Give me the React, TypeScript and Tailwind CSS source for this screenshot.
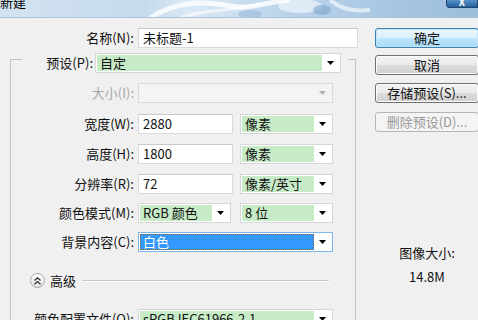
import React from 'react';

const Arrow = ({ disabled }: { disabled?: boolean }) => (
  <svg width="7" height="4" viewBox="0 0 7 4">
    <path d="M0 0h7L3.5 4z" fill={disabled ? '#b0b0b0' : '#000'} />
  </svg>
);

interface ComboProps {
  value?: string;
  width: string;
  disabled?: boolean;
  focused?: boolean;
}

const Combo: React.FC<ComboProps> = ({ value, width, disabled, focused }) => (
  <div
    className={`flex h-[20px] p-[1px] border ${width} ${
      focused ? 'border-[#7eb4ea] bg-white' : disabled ? 'border-[#d9d9d9] bg-[#f4f4f4]' : 'border-[#d6d6d6] bg-white'
    }`}
  >
    {focused ? (
      <span className="flex-1 flex items-center pl-[2px] bg-[#3399ff] text-white border border-dotted border-[#8a6b33]">
        {value}
      </span>
    ) : (
      <span
        className={`flex-1 flex items-center pl-[3px] whitespace-nowrap ${disabled ? 'bg-[#f4f4f4]' : 'bg-[#c7ebc7]'}`}
      >
        {value}
      </span>
    )}
    <span className="w-[17px] flex-none flex items-center justify-center">
      <Arrow disabled={disabled} />
    </span>
  </div>
);

const Input = ({ value, width }: { value: string; width: string }) => (
  <div className={`h-[20px] flex items-center pl-[4px] bg-white border border-[#dadada] border-t-[#c9c9c9] ${width}`}>
    {value}
  </div>
);

const Row = ({ label, children, className, disabled }: { label: string; children: React.ReactNode; className: string; disabled?: boolean }) => (
  <div className={`flex items-center h-[20px] ${className}`}>
    <span className={`w-[127px] text-right pr-[4px] whitespace-nowrap ${disabled ? 'text-[#a8a8a8]' : ''}`}>{label}</span>
    {children}
  </div>
);

const Button = ({ label, className, primary, disabled }: { label: string; className: string; primary?: boolean; disabled?: boolean }) => (
  <div
    className={`h-[20px] w-[104px] rounded-[3px] border flex items-center justify-center whitespace-nowrap ${className} ${
      primary
        ? 'border-[#3c7fb1] bg-[linear-gradient(#eaf6fd_0%,#d9f0fc_50%,#bee6fd_51%,#a7d9f5_100%)] shadow-[inset_0_0_0_1px_#c2e4f6]'
        : disabled
          ? 'border-[#b5b5b5] bg-[#f4f4f4] text-[#9a9a9a]'
          : 'border-[#707070] bg-[linear-gradient(#f2f2f2_0%,#ebebeb_50%,#dddddd_51%,#cfcfcf_100%)] shadow-[inset_0_0_0_1px_#fcfcfc]'
    }`}
  >
    {label}
  </div>
);

export default function App() {
  return (
    <div className="relative w-[478px] h-[320px] overflow-hidden bg-[#f0f0f0] text-[13px] leading-[16px] text-[#111] font-['Noto_Sans_CJK_SC','Microsoft_YaHei',sans-serif]">
      {/* title bar */}
      <div className="relative h-[18px] overflow-hidden border-b border-[#a9c4dc] bg-[linear-gradient(90deg,#d3e3f0_0%,#c6dbee_30%,#dce9f5_40%,#b9d3ea_60%,#a6c4e0_85%,#9dbddb_100%)]">
        <svg className="absolute left-0 top-0" width="478" height="18" viewBox="0 0 478 18">
          <path d="M150 18 C175 2 200 0 230 6 C250 10 265 2 290 0" stroke="#ffffff" strokeOpacity="0.8" strokeWidth="5" fill="none" />
          <path d="M180 18 C205 8 235 12 260 4" stroke="#ffffff" strokeOpacity="0.6" strokeWidth="3" fill="none" />
          <ellipse cx="300" cy="6" rx="22" ry="7" fill="#ffffff" fillOpacity="0.55" />
          <ellipse cx="322" cy="10" rx="9" ry="5" fill="#7fa6cc" fillOpacity="0.6" />
          <path d="M330 0 C340 8 350 12 370 10" stroke="#eaf2fa" strokeOpacity="0.8" strokeWidth="4" fill="none" />
          <ellipse cx="250" cy="14" rx="12" ry="4" fill="#8fb2d4" fillOpacity="0.5" />
        </svg>
        <span className="absolute left-[0px] top-[-6px] text-[13px] leading-[16px] text-black">新建</span>
        <div className="absolute right-0 top-0 w-[32px] h-[8px] rounded-bl-[4px] border border-t-0 border-[#1f4470] bg-[linear-gradient(#5a92c8,#23609c)] flex items-end justify-center">
          <span className="text-white text-[10px] leading-[10px] font-bold">X</span>
        </div>
      </div>

      <div className="flex">
        {/* left panel */}
        <div className="w-[360px] flex-none">
          <div className="flex items-center h-[20px] mt-[10px]">
            <span className="w-[138px] text-right pr-[4px]">名称(N):</span>
            <Input value="未标题-1" width="w-[220px]" />
          </div>

          <div className="ml-[10px] w-[346px] h-[300px] mt-[11px] border border-b-0 border-[#c4c4c4]">
            <div className="flex items-center h-[20px] -mt-[7px] ml-[11px] mr-[7px] bg-[#f0f0f0]">
              <span className="flex-1 text-right pr-[2px]">预设(P):</span>
              <Combo value="自定" width="w-[246px]" />
              <span className="w-[7px]" />
            </div>

            <Row label="大小(I):" className="mt-[10px]" disabled>
              <Combo width="w-[195px]" disabled />
            </Row>
            <Row label="宽度(W):" className="mt-[11px]">
              <Input value="2880" width="w-[95px]" />
              <span className="w-[7px]" />
              <Combo value="像素" width="w-[93px]" />
            </Row>
            <Row label="高度(H):" className="mt-[10px]">
              <Input value="1800" width="w-[95px]" />
              <span className="w-[7px]" />
              <Combo value="像素" width="w-[93px]" />
            </Row>
            <Row label="分辨率(R):" className="mt-[10px]">
              <Input value="72" width="w-[95px]" />
              <span className="w-[7px]" />
              <Combo value="像素/英寸" width="w-[93px]" />
            </Row>
            <Row label="颜色模式(M):" className="mt-[9px]">
              <Combo value="RGB 颜色" width="w-[93px]" />
              <span className="w-[9px]" />
              <Combo value="8 位" width="w-[93px]" />
            </Row>
            <Row label="背景内容(C):" className="mt-[9px]">
              <Combo value="白色" width="w-[195px]" focused />
            </Row>

            <div className="flex items-center h-[15px] mt-[21px] pl-[19px] pr-[26px]">
              <span className="w-[15px] h-[15px] rounded-full border border-[#a8a8a8] bg-[linear-gradient(#ffffff,#e2e2e2)] flex items-center justify-center">
                <svg width="7" height="8" viewBox="0 0 7 8">
                  <path d="M0.5 3.5L3.5 0.8L6.5 3.5M0.5 7.2L3.5 4.5L6.5 7.2" stroke="#333" strokeWidth="1.3" fill="none" />
                </svg>
              </span>
              <span className="ml-[5px]">高级</span>
              <span className="flex-1 ml-[6px] h-[2px] border-t border-[#c8c8c8] border-b-white border-b" />
            </div>

            <Row label="颜色配置文件(O):" className="mt-[21px]">
              <Combo value="sRGB IEC61966-2.1" width="w-[195px]" />
            </Row>
          </div>
        </div>

        {/* right panel */}
        <div className="ml-[15px] w-[104px] flex-none flex flex-col items-center">
          <Button label="确定" className="mt-[10px]" primary />
          <Button label="取消" className="mt-[7px]" />
          <Button label="存储预设(S)..." className="mt-[8px]" />
          <Button label="删除预设(D)..." className="mt-[9px]" disabled />
          <div className="mt-[113px]">图像大小:</div>
          <div className="mt-[8px]">14.8M</div>
        </div>
      </div>
    </div>
  );
}
